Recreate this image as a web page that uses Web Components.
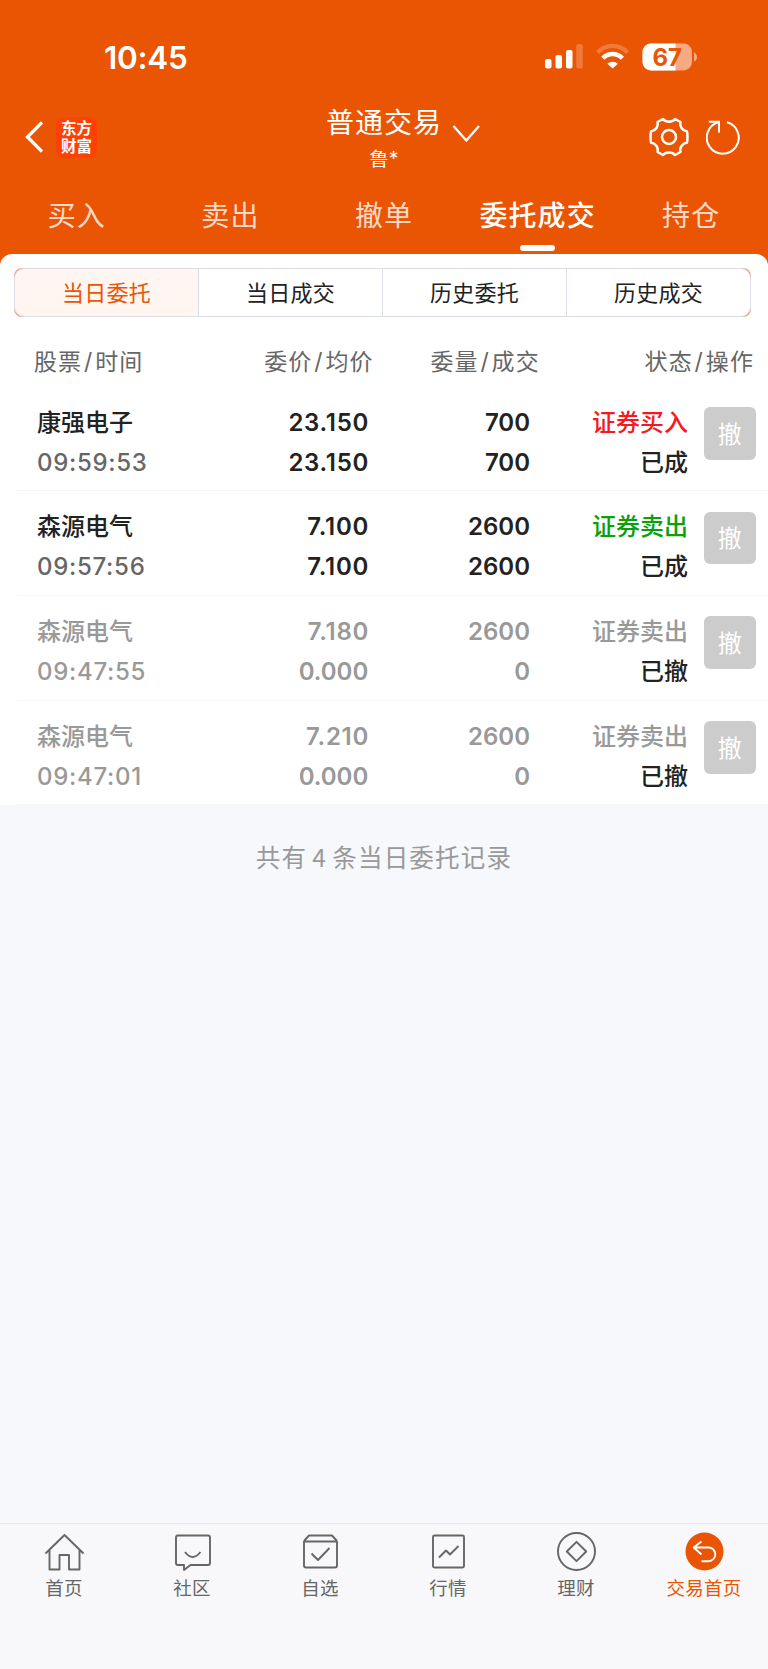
<!DOCTYPE html>
<html lang="zh-CN">
<head>
<meta charset="UTF-8">
<meta name="viewport" content="width=device-width, initial-scale=1.0">
<title>委托成交</title>
<style>
  :root {
    --brand: #ea5504;
    --ink: #222;
    --muted: #666;
    --faded: #999;
    --line: #dcdee5;
    --page: #f7f8fb;
  }
  body {
    margin: 0;
    background: var(--page);
    color: var(--ink);
    font-family: Inter, "Noto Sans CJK SC", sans-serif;
  }
</style>
</head>
<body>
<trade-app></trade-app>

<script>
// Small helper: open shadow root with the given markup
const render = (el, html) => {
  el.attachShadow({ mode: 'open' }).innerHTML = html;
};

// --- Status bar ---
class StatusBar extends HTMLElement {
  connectedCallback() {
    render(this, `
      <style>
        :host {
          display: flex;
          align-items: center;
          justify-content: space-between;
          height: 114px;
          box-sizing: border-box;
          padding: 0 71px 0 104px;
          color: #fff;
        }
        .time { font-size: 31.5px; font-weight: 600; letter-spacing: -0.3px; }
        svg { display: block; }
        .level { font: 700 24px Inter, sans-serif; fill: var(--brand); }
      </style>
      <span class="time"><slot></slot></span>
      <svg width="153" height="28" viewBox="0 0 153 28" fill="#fff">
        <rect x="1" y="16" width="6.5" height="9.5" rx="2"/>
        <rect x="11.5" y="12" width="6.5" height="13.5" rx="2"/>
        <rect x="22" y="7" width="6.5" height="18.5" rx="2"/>
        <rect x="32.3" y="1" width="6.5" height="24.5" rx="2" opacity=".22"/>
        <path d="M53.6 9.6a20 20 0 0 1 30 0" fill="none" stroke="#fff" stroke-width="4.4" opacity=".22"/>
        <path d="M58.8 15.2a13.5 13.5 0 0 1 19.6 0" fill="none" stroke="#fff" stroke-width="4.4"/>
        <path d="M63.3 20.8a7.6 7.6 0 0 1 10.6 0L68.6 25.6z"/>
        <rect x="98.5" y="0.5" width="49.5" height="27" rx="8.5" opacity=".5"/>
        <path d="M107 .5h24.5v27H107a8.5 8.5 0 0 1-8.5-8.5V9a8.5 8.5 0 0 1 8.5-8.5z"/>
        <path d="M150 9.5q3 1.5 3 4.5t-3 4.5z" opacity=".5"/>
        <text class="level" x="123.3" y="22.5" text-anchor="middle">67</text>
      </svg>
    `);
  }
}
customElements.define('status-bar', StatusBar);

// --- Title bar ---
class TitleBar extends HTMLElement {
  connectedCallback() {
    render(this, `
      <style>
        :host {
          display: grid;
          grid-template-columns: 1fr auto 1fr;
          height: 70px;
          box-sizing: border-box;
          padding: 0 27px 0 25px;
          color: #fff;
        }
        svg { display: block; fill: none; stroke: #fff; }
        .left, .right { display: flex; align-items: center; height: 46px; }
        .right { justify-content: flex-end; gap: 17px; }
        .logo {
          display: grid;
          place-items: center;
          width: 41px;
          height: 41px;
          box-sizing: border-box;
          margin-left: 13px;
          padding-bottom: 1px;
          border-radius: 8px;
          background: #ff4106;
          font: 700 15.5px/17.5px "Noto Sans CJK SC", sans-serif;
        }
        .logo span { width: 31px; word-break: break-all; }
        .middle { text-align: center; }
        .title {
          display: flex;
          align-items: flex-start;
          gap: 10px;
          height: 28px;
          padding-left: 40px;
          font-size: 28px;
          line-height: 18px;
          letter-spacing: 1px;
        }
        .title svg { margin-top: 11px; }
        .user { margin-top: 5px; padding-left: 2px; font-size: 19.5px; line-height: 24px; }
      </style>
      <div class="left">
        <svg width="18" height="32" viewBox="0 0 18 32" stroke-width="3.3"><path d="M17 1.5 2.5 16 17 30.5"/></svg>
        <div class="logo"><span>东方财富</span></div>
      </div>
      <div class="middle">
        <div class="title">
          <slot></slot>
          <svg width="28" height="18" viewBox="0 0 28 18" stroke-width="2.3"><path d="M1.5 1 14.3 15.5 27 1"/></svg>
        </div>
        <div class="user"><slot name="user"></slot></div>
      </div>
      <div class="right">
        <svg width="40" height="40" viewBox="0 0 40 40" stroke-width="2.5" stroke-linejoin="round">
          <path d="M14 2C16.5 5.5 23.5 5.5 26 2L31.5 5C30.5 9.5 33 13.5 38 14.5Q39 20 38 25.5C33 26.5 30.5 30.5 31.5 35L26 38C23.5 34.5 16.5 34.5 14 38L8.5 35C9.5 30.5 7 26.5 2 25.5Q1 20 2 14.5C7 13.5 9.5 9.5 8.5 5Z"/>
          <circle cx="20" cy="20" r="7"/>
        </svg>
        <svg width="35" height="36" viewBox="0 0 35 36" stroke-width="2">
          <path d="M21 3.3A16 16 0 1 1 12.5 3.3"/>
          <path d="M2.8 2.8H13V13.5"/>
        </svg>
      </div>
    `);
  }
}
customElements.define('title-bar', TitleBar);

// --- Top tabs ---
class TopTab extends HTMLElement {
  connectedCallback() {
    render(this, `
      <style>
        :host {
          flex: 1;
          display: flex;
          flex-direction: column;
          align-items: center;
          color: rgba(255, 255, 255, .8);
          font-size: 28px;
          line-height: 42px;
          letter-spacing: 1.1px;
        }
        :host([active]) { color: #fff; font-weight: 500; }
        :host([active])::after {
          content: "";
          width: 35px;
          height: 5.5px;
          margin-top: 8px;
          border-radius: 3px;
          background: #fff;
        }
      </style>
      <slot></slot>
    `);
  }
}
customElements.define('top-tab', TopTab);

// --- Segmented control ---
class SegmentBar extends HTMLElement {
  connectedCallback() {
    const items = this.getAttribute('items').split(',');
    render(this, `
      <style>
        :host {
          display: flex;
          height: 49px;
          box-sizing: border-box;
          margin: 0 17px 0 14px;
          border-radius: 8px;
          overflow: hidden;
          background: #f09a72; /* shows through at the rounded corners */
        }
        div {
          flex: 1;
          display: grid;
          place-items: center;
          box-sizing: border-box;
          padding-bottom: 2px;
          border: 1px solid var(--line);
          border-right: 0;
          background: #fff;
          font-size: 22px;
          letter-spacing: .3px;
        }
        div:first-of-type {
          border-radius: 10px 0 0 10px;
          background: #fff5f1;
          color: var(--brand);
        }
        div:last-of-type { border-radius: 0 10px 10px 0; border-right: 1px solid var(--line); }
      </style>
      ${items.map((t) => `<div>${t}</div>`).join('')}
    `);
  }
}
customElements.define('segment-bar', SegmentBar);

// --- Order row ---
class OrderRow extends HTMLElement {
  connectedCallback() {
    const get = (name) => this.getAttribute(name);
    // Inter's "1" is narrow, so prices that contain it are tracked wider
    const price = (value) => `<div class="${value.includes('1') ? 'wide' : ''}">${value}</div>`;
    render(this, `
      <style>
        :host {
          display: grid;
          grid-template-columns: 170px 160px 163px 158px 68px;
          height: 104.7px;
          box-sizing: border-box;
          margin-left: 17px;
          padding: 16px 0 0 20px;
          border-bottom: 1.5px solid #f4f5f8;
          font-size: 24px;
          font-weight: 500;
          line-height: 40px;
          text-align: right;
        }
        .name { text-align: left; }
        .num { font-weight: 560; }
        .price { margin-right: -1.3px; }
        .wide { margin-right: -.7px; letter-spacing: .7px; }
        .time { color: var(--muted); font-weight: 540; letter-spacing: .7px; }
        .buy { color: #f5191e; }
        .sell { color: #0aa00a; }
        :host([cancelled]) .dim { color: var(--faded); }
        button {
          justify-self: end;
          width: 52.5px;
          height: 52.5px;
          margin-top: 4.5px;
          padding: 0 0 2px;
          border: 0;
          border-radius: 6px;
          background: #ccc;
          color: #fff;
          font: 24px "Noto Sans CJK SC", sans-serif;
        }
      </style>
      <div class="name"><div class="dim">${get('name')}</div><div class="time dim">${get('time')}</div></div>
      <div class="num price dim">${price(get('price'))}${price(get('avg'))}</div>
      <div class="num dim">${get('qty')}<br>${get('done')}</div>
      <div><div class="${get('side')} dim">${get('side') === 'buy' ? '证券买入' : '证券卖出'}</div><div>${get('state')}</div></div>
      <button>撤</button>
    `);
  }
}
customElements.define('order-row', OrderRow);

// --- Bottom navigation ---
const icons = {
  home: '<path d="M1.5 20.5 20.5 2 39.5 20.5M5.5 17V36.500H15.500V22H25V36.500H35.500V17"/>',
  chat: '<path d="M5 2.5H36Q38 2.5 38 4.5V30Q38 32 36 32H18.5L12 37V32H6Q4 32 4 30V4.5Q4 2.5 6 2.5ZM13 19Q20.5 29 28.5 19"/>',
  pick: '<path d="M4 8 9 2.5H32L37 8M4 8.5H37M4 8V32.5Q4 34.5 6 34.5H35Q37 34.5 37 32.5V8M11.5 20.5 18 27 29.5 15"/>',
  chart: '<rect x="5" y="2.5" width="31" height="32" rx="1.5"/><path d="M11 24.5 18 17.5 22 21.5 30.5 13"/>',
  money: '<circle cx="20.5" cy="18.5" r="18.5"/><path d="M20.5 8.8 30.2 18.5 20.5 28.2 10.8 18.5Z"/>',
  back: '<circle cx="20.5" cy="18.5" r="19" fill="#ea5504" stroke="none"/><path d="M17.5 8.5 9.7 14.5 17.5 21.5M9.7 14.5H24.5A6.8 6.8 0 0 1 24.5 28.2H17.5" stroke="#fff"/>'
};

class NavItem extends HTMLElement {
  connectedCallback() {
    render(this, `
      <style>
        :host {
          flex: 1;
          display: flex;
          flex-direction: column;
          align-items: center;
          color: var(--muted);
          font-size: 18.5px;
          line-height: 28px;
          letter-spacing: .3px;
        }
        :host([active]) { color: var(--brand); }
        svg { display: block; fill: none; stroke: currentColor; stroke-width: 1.9; stroke-linejoin: round; overflow: visible; }
      </style>
      <svg width="41" height="41" viewBox="0 0 41 41">${icons[this.getAttribute('icon')]}</svg>
      <slot></slot>
    `);
  }
}
customElements.define('nav-item', NavItem);

// --- Page ---
class TradeApp extends HTMLElement {
  connectedCallback() {
    render(this, `
      <style>
        :host {
          display: flex;
          flex-direction: column;
          height: 1669px;
          background: var(--page);
        }
        header { background: var(--brand); height: 267px; }
        .tabs { display: flex; padding-top: 11px; }
        main {
          margin-top: -13.5px;
          padding-top: 14px;
          border-radius: 12px 12px 0 0;
          background: #fff;
        }
        .columns {
          display: flex;
          justify-content: space-between;
          padding: 27px 14px 0 34px;
          height: 70px;
          box-sizing: border-box;
          color: var(--muted);
          font-size: 23px;
          line-height: 36px;
          letter-spacing: 1.1px;
        }
        .columns span:nth-child(2) { margin-left: 64px; }
        .columns span:nth-child(4) { margin-left: 48px; }
        .columns i { margin: 0 1.8px; font-style: normal; }
        .total {
          margin: 34px 0 0;
          color: var(--faded);
          font: 24.5px/36px "Noto Sans CJK SC", sans-serif;
          letter-spacing: 1.2px;
          word-spacing: -1.6px;
          text-align: center;
        }
        nav {
          display: flex;
          height: 146px;
          box-sizing: border-box;
          margin-top: auto;
          padding-top: 9px;
          border-top: 1.5px solid #e6e7ee;
          background: #f8f8fb;
        }
      </style>
      <header>
        <status-bar>10:45</status-bar>
        <title-bar>普通交易<span slot="user">鲁*</span></title-bar>
        <div class="tabs">
          <top-tab>买入</top-tab>
          <top-tab>卖出</top-tab>
          <top-tab>撤单</top-tab>
          <top-tab active>委托成交</top-tab>
          <top-tab>持仓</top-tab>
        </div>
      </header>
      <main>
        <segment-bar items="当日委托,当日成交,历史委托,历史成交"></segment-bar>
        <div class="columns"><span>股票<i>/</i>时间</span><span>委价<i>/</i>均价</span><span>委量<i>/</i>成交</span><span>状态<i>/</i>操作</span></div>
        <order-row name="康强电子" time="09:59:53" price="23.150" avg="23.150" qty="700" done="700" side="buy" state="已成"></order-row>
        <order-row name="森源电气" time="09:57:56" price="7.100" avg="7.100" qty="2600" done="2600" side="sell" state="已成"></order-row>
        <order-row cancelled name="森源电气" time="09:47:55" price="7.180" avg="0.000" qty="2600" done="0" side="sell" state="已撤"></order-row>
        <order-row cancelled name="森源电气" time="09:47:01" price="7.210" avg="0.000" qty="2600" done="0" side="sell" state="已撤"></order-row>
      </main>
      <p class="total">共有 4 条当日委托记录</p>
      <nav>
        <nav-item icon="home">首页</nav-item>
        <nav-item icon="chat">社区</nav-item>
        <nav-item icon="pick">自选</nav-item>
        <nav-item icon="chart">行情</nav-item>
        <nav-item icon="money">理财</nav-item>
        <nav-item icon="back" active>交易首页</nav-item>
      </nav>
    `);
  }
}
customElements.define('trade-app', TradeApp);
</script>
</body>
</html>
